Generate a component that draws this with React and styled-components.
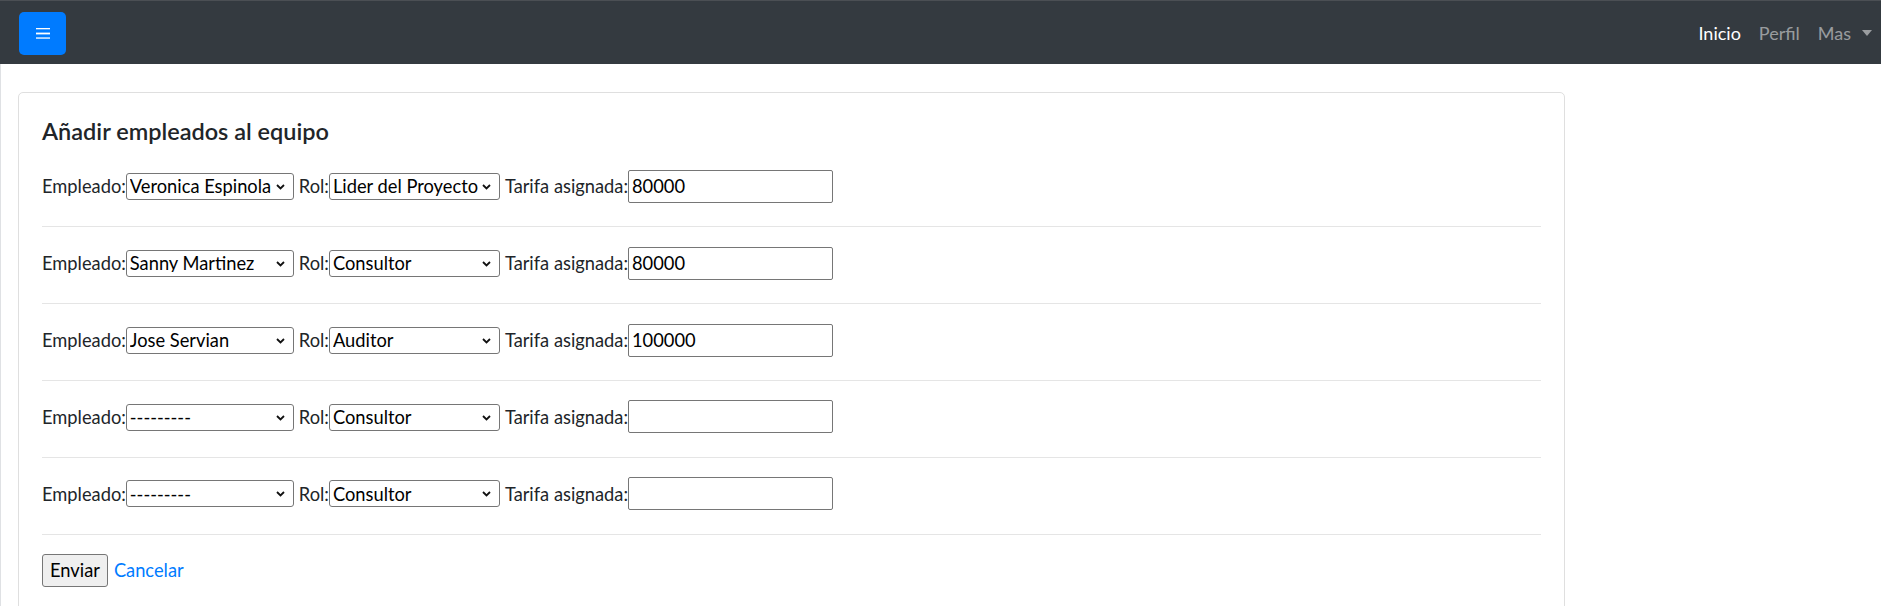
import React from "react";
import styled, { createGlobalStyle } from "styled-components";

const GlobalStyle = createGlobalStyle`
  html, body { margin: 0; padding: 0; background: #fff; }
  body {
    font-family: "Segoe UI", Lato, "Noto Sans", sans-serif;
    font-size: 18.3px;
    line-height: 1.5;
    color: #212529;
  }
  * { box-sizing: border-box; }
`;

const Navbar = styled.nav`
  height: 64px;
  background: #343a40;
  border-top: 1px solid #4b4f54;
  display: flex;
  align-items: center;
  justify-content: space-between;
  padding: 0 9px 0 19px;
`;

const Toggler = styled.button`
  width: 47px;
  height: 43px;
  margin-top: 1px;
  background: #007bff;
  border: none;
  border-radius: 5px;
  display: flex;
  align-items: center;
  justify-content: center;
  padding: 0;
  cursor: pointer;
`;

const NavList = styled.ul`
  list-style: none;
  margin: 0;
  padding: 0;
  display: flex;
  align-items: center;
  gap: 18px;
`;

const NavLink = styled.a`
  color: ${(p) => (p.$active ? "#ffffff" : "rgba(255,255,255,0.5)")};
  text-decoration: none;
  font-size: 18px;
  line-height: 1;
  display: flex;
  align-items: center;
`;

const Caret = styled.span`
  display: inline-block;
  width: 0;
  height: 0;
  margin-left: 11px;
  border-top: 6px solid rgba(255,255,255,0.5);
  border-left: 5.5px solid transparent;
  border-right: 5.5px solid transparent;
`;

const Main = styled.main`
  border-left: 1px solid #dfe1e4;
  padding: 28px 0 0 17px;
`;

const Card = styled.section`
  width: 1547px;
  border: 1px solid #dfdfdf;
  border-radius: 5px;
  padding: 24px 23px 24px 23px;
  min-height: 560px;
`;

const Title = styled.h5`
  margin: 0 0 24px;
  font-size: 23.5px;
  font-weight: 600;
  line-height: 28.8px;
  color: #212529;
`;

const Row = styled.div`
  display: flex;
  align-items: baseline;
  height: 37.5px;
`;

const Label = styled.label`
  margin-left: ${(p) => (p.$first ? "0" : "5px")};
  white-space: nowrap;
`;

const SelectWrap = styled.span`
  position: relative;
  display: inline-block;
`;

const Select = styled.select`
  appearance: none;
  -webkit-appearance: none;
  width: ${(p) => p.$w}px;
  height: 27px;
  border: 1px solid #767676;
  border-radius: 3px;
  background: #fff;
  color: #000;
  font: inherit;
  line-height: 1;
  padding: 0 14px 0 3px;
  margin: 0;
`;

const Chevron = styled.svg`
  position: absolute;
  right: 9px;
  top: 11px;
  pointer-events: none;
`;

const Input = styled.input`
  width: 205px;
  height: 33px;
  border: 1px solid #767676;
  border-radius: 2px;
  padding: 1px 3px;
  font: inherit;
  color: #000;
  margin: 0;
`;

const Divider = styled.hr`
  border: 0;
  border-top: 1px solid #e5e5e5;
  margin: 19.2px 0;
`;

const Actions = styled.div`
  display: flex;
  align-items: center;
  gap: 6px;
`;

const SubmitButton = styled.button`
  height: 33px;
  padding: 0 7px;
  background: #efefef;
  border: 1px solid #767676;
  border-radius: 3px;
  font: inherit;
  color: #000;
`;

const CancelLink = styled.a`
  color: #007bff;
  text-decoration: none;
`;

const employees = ["---------", "Veronica Espinola", "Sanny Martinez", "Jose Servian"];
const roles = ["Lider del Proyecto", "Consultor", "Auditor"];

const rows = [
  { emp: "Veronica Espinola", rol: "Lider del Proyecto", tarifa: "80000" },
  { emp: "Sanny Martinez", rol: "Consultor", tarifa: "80000" },
  { emp: "Jose Servian", rol: "Auditor", tarifa: "100000" },
  { emp: "---------", rol: "Consultor", tarifa: "" },
  { emp: "---------", rol: "Consultor", tarifa: "" },
];

function Dropdown({ width, value, options }) {
  return (
    <SelectWrap>
      <Select $w={width} defaultValue={value}>
        {options.map((o) => (
          <option key={o} value={o}>{o}</option>
        ))}
      </Select>
      <Chevron width="9" height="6" viewBox="0 0 9 6">
        <path d="M1 1 L4.5 4.5 L8 1" fill="none" stroke="#111" strokeWidth="1.8" />
      </Chevron>
    </SelectWrap>
  );
}

export default function App() {
  return (
    <>
      <GlobalStyle />
      <Navbar>
        <Toggler aria-label="menu">
          <svg width="14" height="11" viewBox="0 0 14 11">
            <rect x="0" y="0" width="14" height="1.3" fill="#fff" />
            <rect x="0" y="4.6" width="14" height="1.8" fill="#fff" />
            <rect x="0" y="9.4" width="14" height="1.3" fill="#fff" />
          </svg>
        </Toggler>
        <NavList>
          <li><NavLink href="#" $active>Inicio</NavLink></li>
          <li><NavLink href="#">Perfil</NavLink></li>
          <li><NavLink href="#">Mas<Caret /></NavLink></li>
        </NavList>
      </Navbar>
      <Main>
        <Card>
          <Title>Añadir empleados al equipo</Title>
          {rows.map((r, i) => (
            <React.Fragment key={i}>
              <Row>
                <Label $first>Empleado:</Label>
                <Dropdown width={168} value={r.emp} options={employees} />
                <Label>Rol:</Label>
                <Dropdown width={171} value={r.rol} options={roles} />
                <Label>Tarifa asignada:</Label>
                <Input defaultValue={r.tarifa} />
              </Row>
              <Divider />
            </React.Fragment>
          ))}
          <Actions>
            <SubmitButton type="button">Enviar</SubmitButton>
            <CancelLink href="#">Cancelar</CancelLink>
          </Actions>
        </Card>
      </Main>
    </>
  );
}
